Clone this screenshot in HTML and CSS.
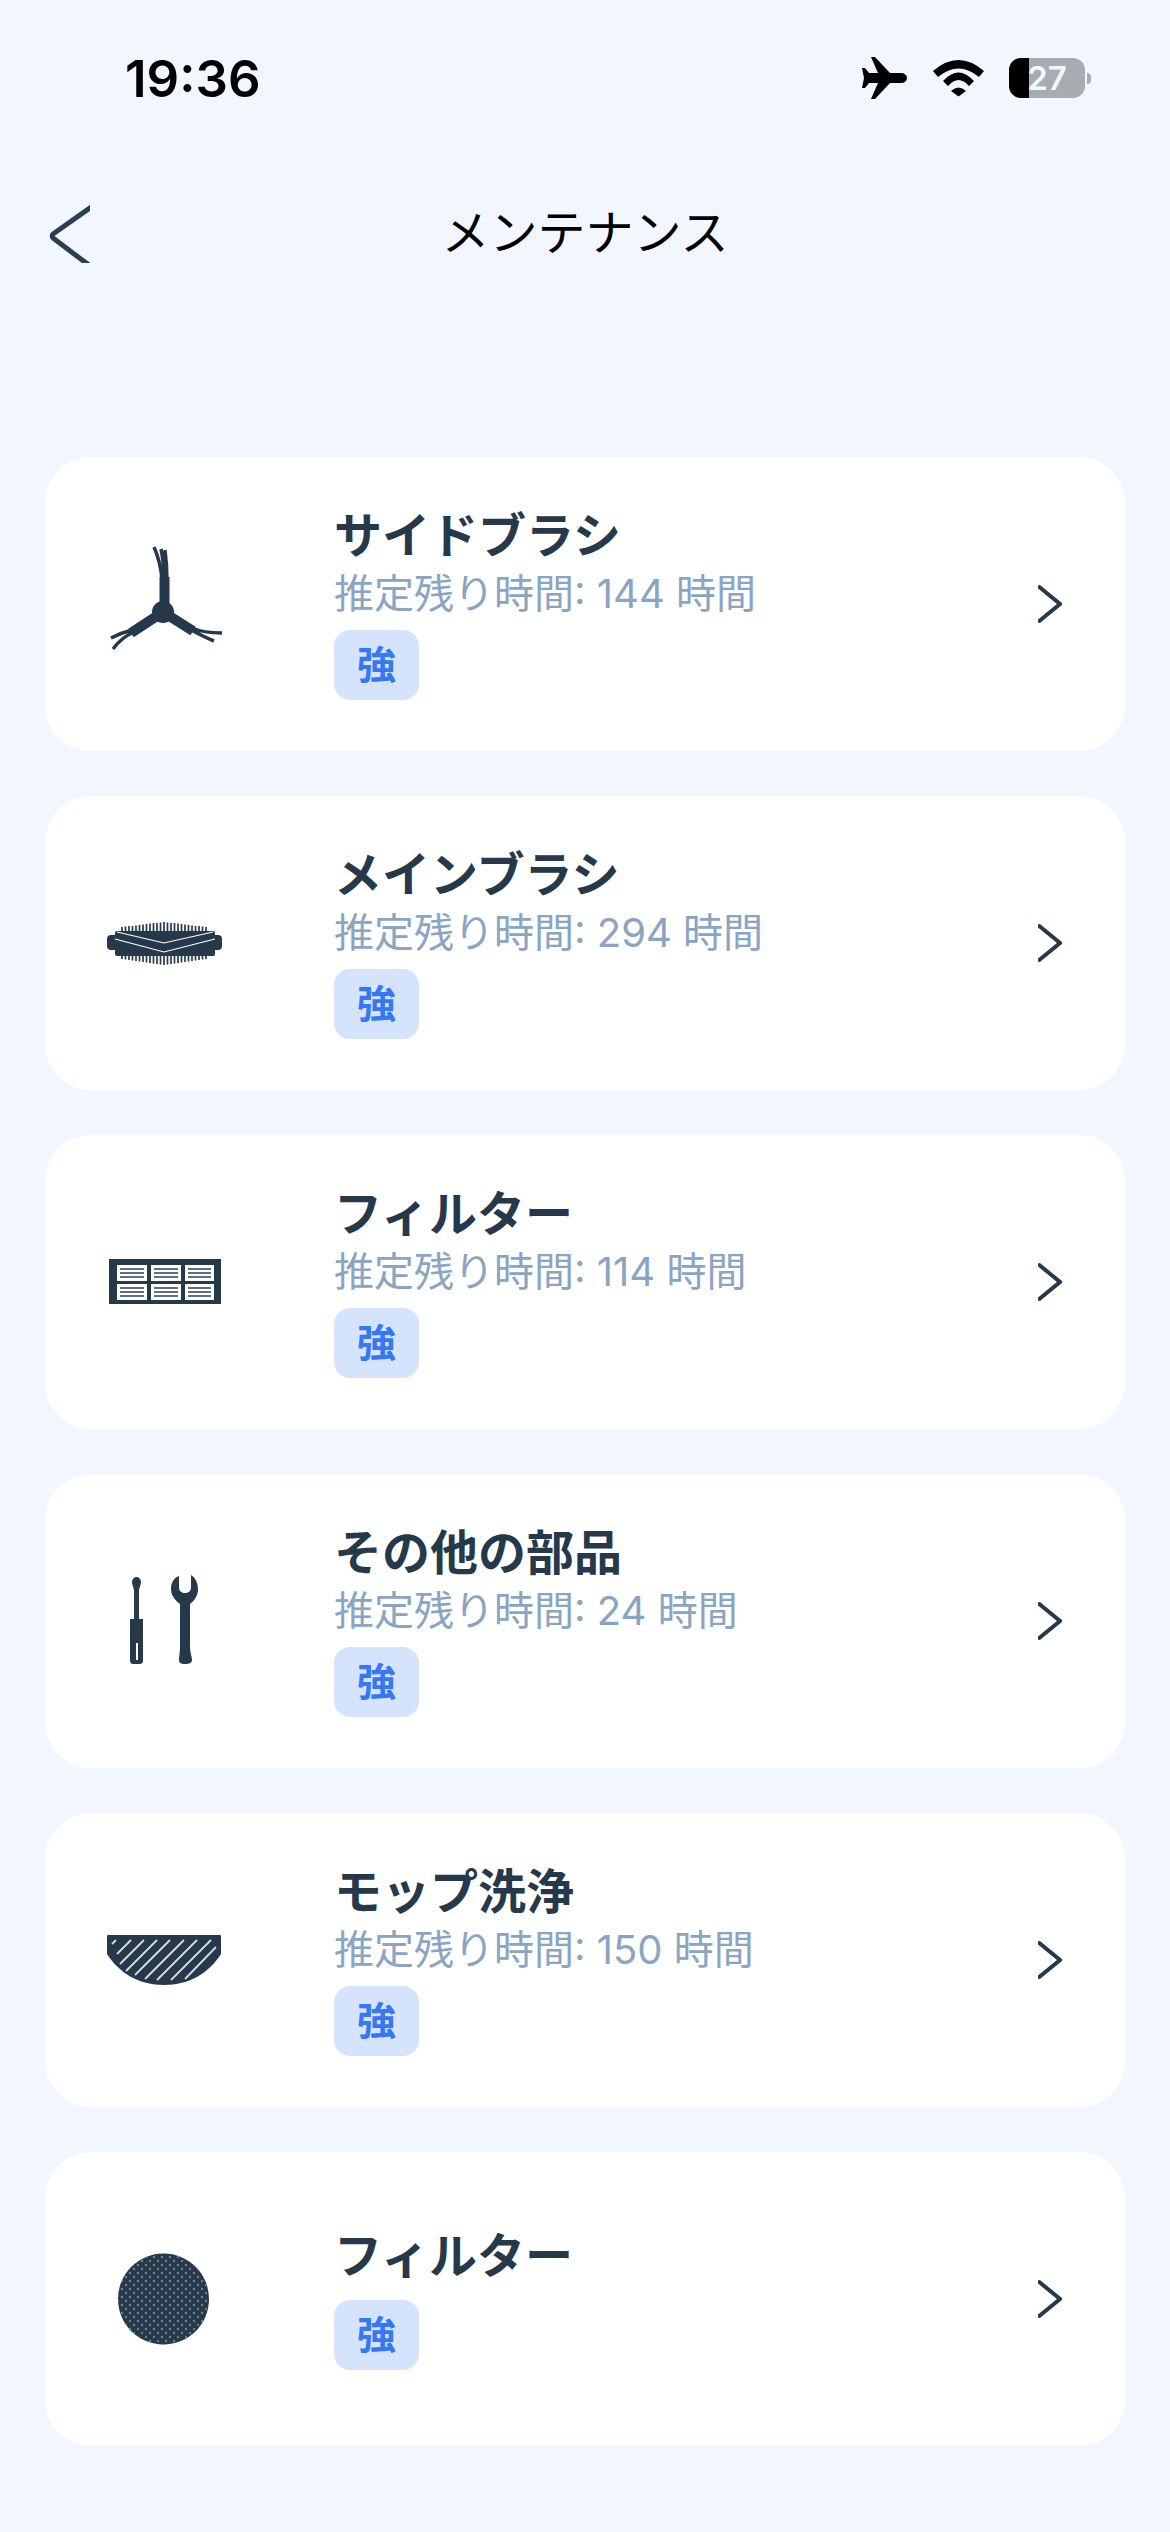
FILE: index.html
```html
<!DOCTYPE html>
<html lang="ja">
<head>
    <meta charset="UTF-8">
    <meta name="viewport" content="width=device-width, initial-scale=1.0">
    <title>メンテナンス</title>
    <link rel="stylesheet" href="styles.css">
</head>
<body>
    <div class="status-bar">
        <span class="time">19:36</span>
        <div class="status-icons">
            <svg class="icon-plane" width="46" height="42" viewBox="0 0 46 42">
                <path d="M46 21C46 18 43 16 40 16L29 16L14 0L10 0L17 16L8 16L4 11L1 11L3 21L1 31L4 31L8 26L17 26L10 42L14 42L29 26L40 26C43 26 46 24 46 21Z"/>
            </svg>
            <svg class="icon-wifi" width="51" height="37" viewBox="0 0 51 37">
                <path d="M0 11Q25.500 -11 51 11L46 17Q25.500 0 5 17Z"/>
                <path d="M10 21Q25.500 4 41 21L36 26Q25.500 14 15 26Z"/>
                <path d="M18 31Q25.500 24 33 31L25.500 36.500Z"/>
            </svg>
            <div class="battery">27</div>
        </div>
    </div>

    <div class="nav-bar">
        <svg class="back" width="42" height="60" viewBox="0 0 42 60">
            <path d="M46 2L5 31Q3.500 33 5 35L46 66"/>
        </svg>
        <h1>メンテナンス</h1>
    </div>

    <div class="list">
        <div class="card">
            <svg class="part" viewBox="0 0 120 120">
                <circle cx="59" cy="68" r="11"/>
                <path class="arm" d="M60.500 68V33"/>
                <path class="arm" d="M59 68L27 89"/>
                <path class="arm" d="M59 68L89 87"/>
                <path class="hair" d="M58 36C57 22 54 12 50 3M60 36C60 24 59 14 57 5M63 36C63 24 62 14 61 6"/>
                <path class="hair" d="M28 86C20 88 13 91 7 94M30 88C21 92 14 98 9 105"/>
                <path class="hair" d="M88 84C97 88 107 89 118 89M87 86C95 90 102 94 110 97"/>
            </svg>
            <div class="info">
                <div class="name">サイドブラシ</div>
                <div class="remain">推定残り時間: 144 時間</div>
                <span class="badge">強</span>
            </div>
            <svg class="arrow" width="24" height="38" viewBox="0 0 24 38"><path d="M0 1L22 19L0 37"/></svg>
        </div>

        <div class="card">
            <svg class="part" viewBox="0 0 120 120">
                <path class="bristle" d="M18 44V76M21.500 43.500V76.500M25 43V77M28.500 43V77.500M32 42.500V78M35.500 42V78.500M39 41.500V79M42.500 41V79.500M46 40.500V80M49.500 40V80.500M53 40V81M56.500 39.500V81.500M60 39V82M63.500 39.500V81.500M67 40V81M70.500 40V80.500M74 40.500V80M77.500 41V79.500M81 41.500V79M84.500 42V78.500M88 42.500V78M91.500 43V77.500M95 43V77M98.500 43.500V76.500M102 44V76"/>
                <rect x="11" y="48" width="100" height="25" rx="2"/>
                <rect x="3" y="52" width="115" height="15" rx="4"/>
                <path class="seam" d="M13 49L60 60L109 49M11 56L60 69L111 56"/>
            </svg>
            <div class="info">
                <div class="name">メインブラシ</div>
                <div class="remain">推定残り時間: 294 時間</div>
                <span class="badge">強</span>
            </div>
            <svg class="arrow" width="24" height="38" viewBox="0 0 24 38"><path d="M0 1L22 19L0 37"/></svg>
        </div>

        <div class="card">
            <svg class="part" viewBox="0 0 120 120">
                <rect x="5" y="37" width="112" height="45"/>
                <g class="cell">
                    <rect x="13" y="43" width="30" height="16"/>
                    <rect x="47" y="43" width="30" height="16"/>
                    <rect x="81" y="43" width="29" height="16"/>
                    <rect x="13" y="62" width="30" height="16"/>
                    <rect x="47" y="62" width="30" height="16"/>
                    <rect x="81" y="62" width="29" height="16"/>
                </g>
                <path class="mesh" d="M16 47H40M50 47H74M84 47H107M16 51H40M50 51H74M84 51H107M16 55H40M50 55H74M84 55H107M16 66H40M50 66H74M84 66H107M16 70H40M50 70H74M84 70H107M16 74H40M50 74H74M84 74H107"/>
            </svg>
            <div class="info">
                <div class="name">フィルター</div>
                <div class="remain">推定残り時間: 114 時間</div>
                <span class="badge">強</span>
            </div>
            <svg class="arrow" width="24" height="38" viewBox="0 0 24 38"><path d="M0 1L22 19L0 37"/></svg>
        </div>

        <div class="card">
            <svg class="part" viewBox="0 0 120 120">
                <path d="M28 21C28 18 30 16 32.500 16C35 16 37 18 37 21C37 24 35.500 26 35 29V58H39V100C39 102 37.500 103 36 103H29C27.500 103 26 102 26 100V58H30V29C29.500 26 28 24 28 21Z"/>
                <rect class="slot" x="32" y="82" width="2" height="17"/>
                <path d="M75 15C69 17 67 23 67 28C67 35 72 40 76 43L76 85C76 92 75 96 75 99C75 102 77 103 81 103C85 103 88 102 88 99C88 96 86 92 86 85L86 43C90 40 94 35 94 28C94 23 92 17 87 14L87 27C87 30 84 32 81 32C78 32 75 30 75 27Z"/>
            </svg>
            <div class="info">
                <div class="name">その他の部品</div>
                <div class="remain">推定残り時間: 24 時間</div>
                <span class="badge">強</span>
            </div>
            <svg class="arrow" width="24" height="38" viewBox="0 0 24 38"><path d="M0 1L22 19L0 37"/></svg>
        </div>

        <div class="card">
            <svg class="part" viewBox="0 0 120 120">
                <path d="M3 36Q3 35 4 35H116Q117 35 117 36V54C105 73 85 85 60 85C35 85 15 73 3 54Z"/>
                <path class="stripe" d="M12 40L8 44M27 40L13 54M40 40L16 64M53 40L22 71M66 40L31 75M80 40L41 79M93 40L53 80M107 40L67 80M112 47L81 79"/>
            </svg>
            <div class="info">
                <div class="name">モップ洗浄</div>
                <div class="remain">推定残り時間: 150 時間</div>
                <span class="badge">強</span>
            </div>
            <svg class="arrow" width="24" height="38" viewBox="0 0 24 38"><path d="M0 1L22 19L0 37"/></svg>
        </div>

        <div class="card">
            <svg class="part" viewBox="0 0 120 120">
                <defs>
                    <pattern id="dots" width="8" height="8" patternUnits="userSpaceOnUse">
                        <circle class="dot" cx="2" cy="2" r="1.200"/>
                        <circle class="dot" cx="6" cy="6" r="1.200"/>
                    </pattern>
                </defs>
                <circle cx="59.500" cy="60" r="45.500"/>
                <circle cx="59.500" cy="60" r="45.500" fill="url(#dots)"/>
            </svg>
            <div class="info">
                <div class="name">フィルター</div>
                <span class="badge">強</span>
            </div>
            <svg class="arrow" width="24" height="38" viewBox="0 0 24 38"><path d="M0 1L22 19L0 37"/></svg>
        </div>
    </div>
</body>
</html>
```

FILE: styles.css
```css
body {
    font-family: Inter, "Noto Sans CJK JP", sans-serif;
    background-color: #f2f6ff;
    margin: 0;
    padding: 0;
}

.status-bar {
    display: flex;
    align-items: center;
    justify-content: space-between;
    height: 156px;
    padding: 0 85px 0 125px;
}

.time {
    font-size: 51px;
    font-weight: 600;
    color: #000;
}

.status-icons {
    display: flex;
    align-items: center;
}

.icon-plane {
    margin-right: 26px;
}

.icon-wifi {
    margin-right: 25px;
}

.battery {
    position: relative;
    width: 76px;
    height: 40px;
    border-radius: 12px;
    background: linear-gradient(to right, #000 20px, #a8abb0 20px);
    color: #f2f6ff;
    font-size: 33px;
    font-weight: 600;
    line-height: 40px;
    text-align: center;
}

.battery::after {
    content: "";
    position: absolute;
    left: 78px;
    top: 15px;
    width: 4px;
    height: 11px;
    border-radius: 0 6px 6px 0;
    background-color: #a8abb0;
}

.nav-bar {
    display: grid;
    grid-template-columns: 1fr auto 1fr;
    align-items: center;
    height: 154px;
    padding-left: 48px;
    padding-right: 48px;
}

.back path {
    fill: none;
    stroke: #2a3f52;
    stroke-width: 5;
}

h1 {
    grid-column: 2;
    margin: 0;
    font-size: 48px;
    font-weight: 400;
    line-height: 60px;
    color: #000;
}

.list {
    display: flex;
    flex-direction: column;
    gap: 45px;
    margin: 147px 45px 0;
}

.card {
    display: flex;
    align-items: center;
    height: 294px;
    padding: 0 63px 0 59px;
    background-color: #fff;
    border-radius: 46px;
}

.part {
    flex: none;
    width: 120px;
    height: 120px;
    margin-right: 110px;
    fill: #26394a;
}

.arm {
    fill: none;
    stroke: #26394a;
    stroke-width: 10;
}

.hair {
    fill: none;
    stroke: #26394a;
    stroke-width: 3.500;
}

.bristle {
    fill: none;
    stroke: #26394a;
    stroke-width: 1.700;
}

.seam {
    fill: none;
    stroke: #fff;
    stroke-width: 1.200;
}

.cell rect {
    fill: #fff;
}

.mesh {
    fill: none;
    stroke: #5f6f7d;
    stroke-width: 1.800;
}

.slot {
    fill: #fff;
}

.stripe {
    fill: none;
    stroke: #d8dde2;
    stroke-width: 1.800;
}

.dot {
    fill: #6b7f90;
}

.info {
    flex: 1;
}

.name {
    font-size: 48px;
    font-weight: 700;
    line-height: 57px;
    color: #26394a;
}

.remain {
    margin: 6px 0 -4px;
    font-size: 40px;
    line-height: 48px;
    color: #8aa4c4;
}

.badge {
    display: block;
    width: 85px;
    height: 70px;
    margin-top: 16px;
    margin-bottom: 2px;
    border-radius: 16px;
    background-color: #d6e3fd;
    color: #3478f6;
    font-size: 39px;
    font-weight: 700;
    line-height: 70px;
    text-align: center;
}

.arrow {
    flex: none;
}

.arrow path {
    fill: none;
    stroke: #26394a;
    stroke-width: 4;
}
```
